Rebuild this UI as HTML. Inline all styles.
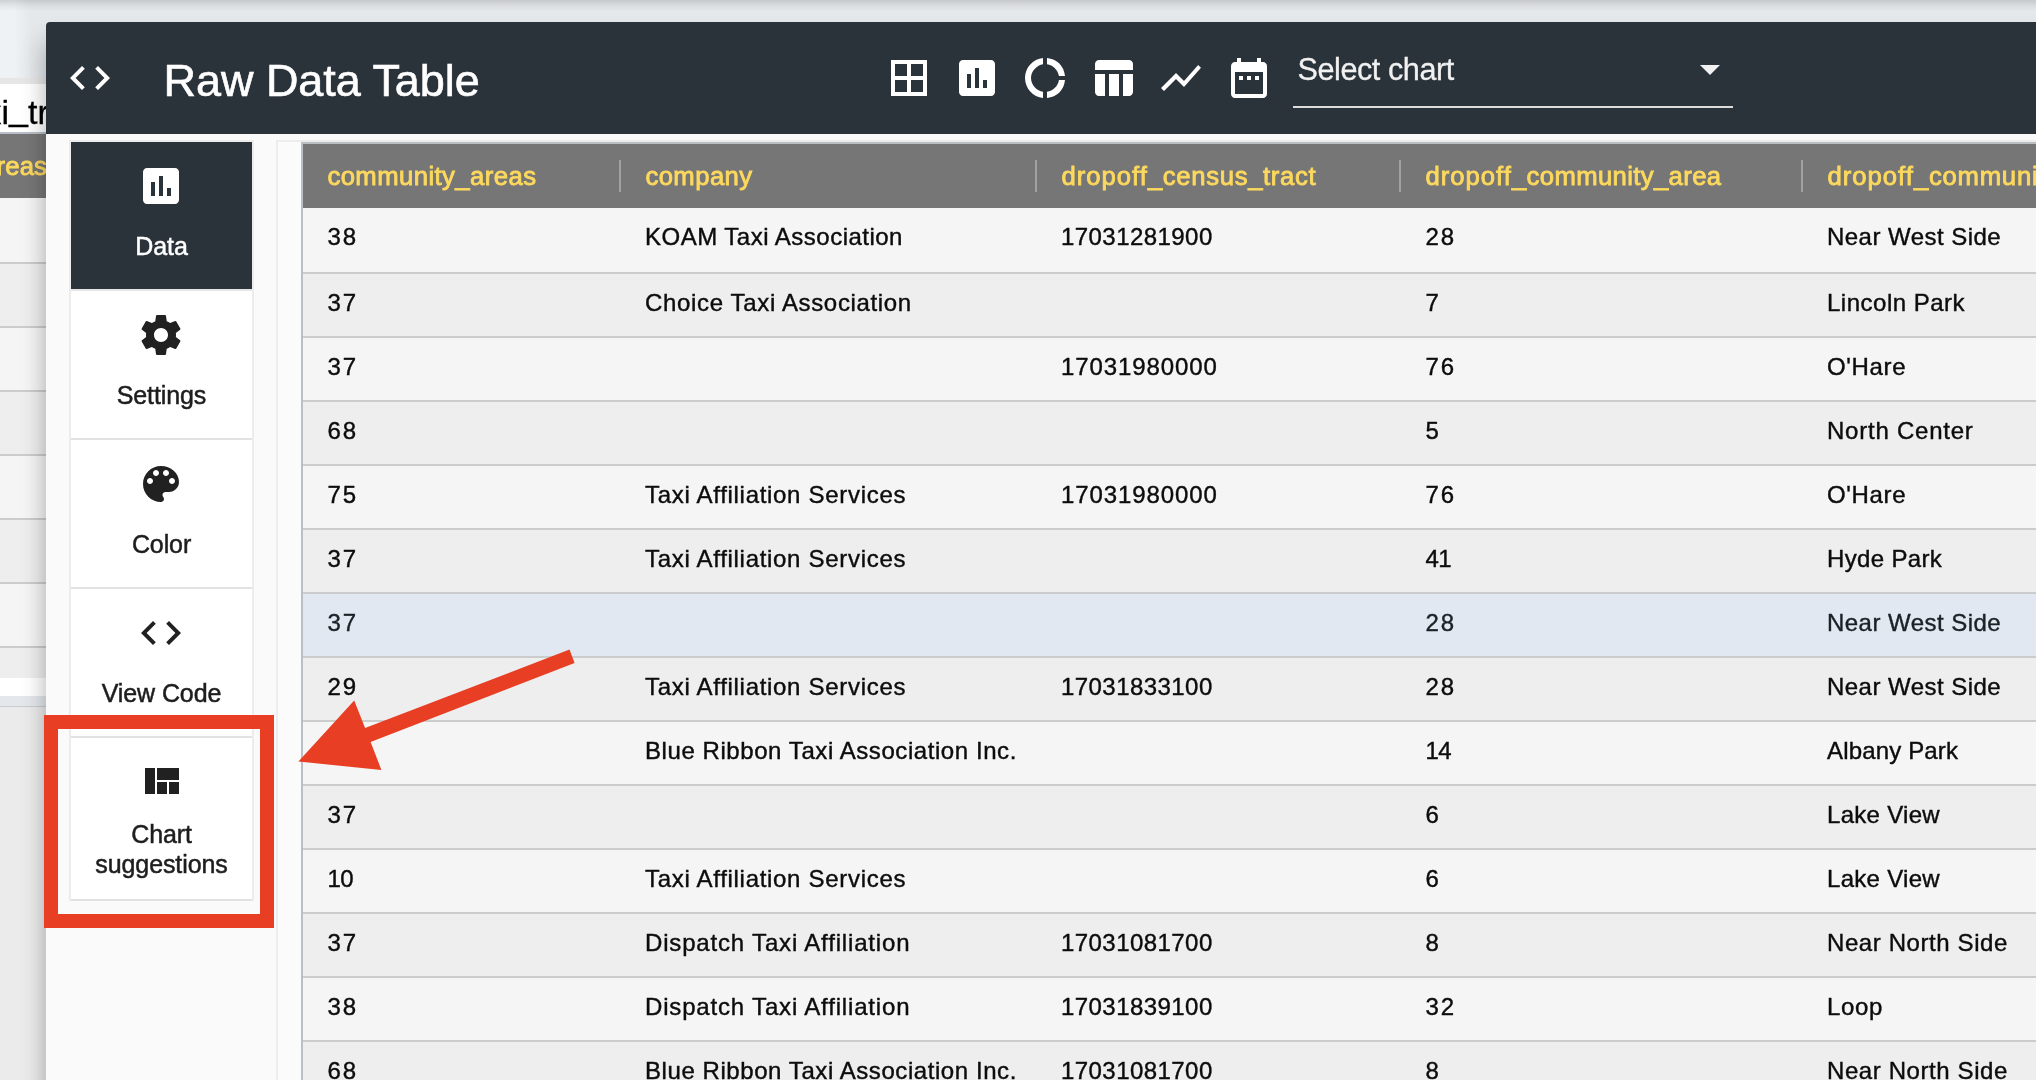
<!DOCTYPE html>
<html lang="en">
<head>
<meta charset="utf-8">
<title>Raw Data Table</title>
<style>
*{box-sizing:border-box;margin:0;padding:0}
html,body{width:2036px;height:1080px;overflow:hidden}
body{will-change:transform;position:relative;background:#e5e8eb;font-family:"Liberation Sans",sans-serif;color:#111}
.abs{position:absolute}
/* ---------- page behind the dialog ---------- */
#topshade{left:0;top:0;width:2036px;height:11px;background:linear-gradient(rgba(60,65,70,.19),rgba(60,65,70,.07) 50%,rgba(60,65,70,0))}
#bglight{left:0;top:0;width:32px;height:78px;background:linear-gradient(90deg,#eef2f5,#eef2f5 40%,rgba(238,242,245,0))}
#bgband{left:0;top:78px;width:60px;height:6px;background:#e6e6e6}
#bgtitle{left:0;top:84px;width:60px;height:49px;background:#fff}
#bgtitle span{position:absolute;left:-15.5px;top:4px;font-size:34px;line-height:49px;color:#000;white-space:nowrap;-webkit-text-stroke:.3px #000}
#bgtitle u{text-decoration:none;position:relative;top:-4px}
#bgline{left:0;top:132px;width:60px;height:2px;background:#b9bfc6}
#bghead{left:0;top:134px;width:60px;height:64px;background:#767676}
#bghead span{position:absolute;left:-3.4px;top:0;line-height:64px;font-size:25.7px;color:#fcd95e;white-space:nowrap;letter-spacing:.1px;-webkit-text-stroke:.85px #fcd95e}
.bgrow{left:0;width:60px;border-bottom:2px solid #cbcccc}
#bgwhite{left:0;top:678px;width:60px;height:18px;background:#fff}
#bgblue{left:0;top:696px;width:60px;height:10px;background:#e4e7ec}
#bgdark{left:0;top:706px;width:60px;height:1px;background:#c9ccd0}
#bgbottom{left:0;top:707px;width:60px;height:373px;background:#ebebeb}
#bgshade{display:none;left:16px;top:134px;width:30px;height:946px;background:linear-gradient(90deg,rgba(0,0,0,0),rgba(0,0,0,.05) 50%,rgba(0,0,0,.17))}
#bgshade2{display:none;left:26px;top:30px;width:20px;height:104px;background:linear-gradient(90deg,rgba(0,0,0,0),rgba(0,0,0,.10))}
/* ---------- dialog ---------- */
#dialog{left:46px;top:22px;width:2000px;height:1070px;background:#fafafa;border-radius:4px 0 0 0;overflow:hidden;box-shadow:0 20px 24px rgba(0,0,0,.32)}
#dhead{left:0;top:0;width:2000px;height:112px;background:#2a323a}
#title{left:117.6px;top:29px;font-size:45px;line-height:60px;color:#fff;white-space:nowrap;letter-spacing:-.05px;-webkit-text-stroke:.6px #fff}
.ico{position:absolute;width:48px;height:48px;fill:#fff}
#seltxt{left:1251.6px;top:27px;font-size:30.6px;line-height:40px;color:#f1f1f1;white-space:nowrap;letter-spacing:-.45px;-webkit-text-stroke:.3px #f1f1f1}
#selline{left:1247px;top:84px;width:440px;height:2px;background:#dcdcdc}
#selarrow{left:1654px;top:43px;width:0;height:0;border-left:10px solid transparent;border-right:10px solid transparent;border-top:10px solid #f1f1f1}
/* sidebar */
#side{left:23px;top:118px;width:185px;border:2px solid #ececec;border-bottom:0;background:#fff}
.sb{position:relative;width:181px;height:149px;border-bottom:2px solid #e2e2e2;background:#fff;text-align:center;font-size:25px;color:#1d1d1d;-webkit-text-stroke:.5px currentColor;letter-spacing:-.1px}
.sb svg{position:absolute;left:66.4px;top:20px;width:48px;height:48px;fill:#212121}
.sb span{position:absolute;left:0;width:181px;top:89.4px;line-height:30px}
.sb.act{background:#2a323a;color:#fff;border-bottom-color:#e6e6e6}
.sb.act svg{fill:#fff}
.sb.last{height:163px}
.sb.last span{top:81px}
/* card + table */
#card{left:230px;top:118px;width:1800px;height:1000px;border:2px solid #ededed;background:#fbfbfb}
#grid{left:255px;top:120px;width:1800px;height:1000px;border:2px solid #babfc6;background:#f5f5f5}
#ghead{left:0;top:0;width:1800px;height:64px;background:#767676;z-index:2}
.hc{position:absolute;top:0;line-height:64px;font-size:25.7px;color:#fcd95e;white-space:nowrap;letter-spacing:.42px;-webkit-text-stroke:.85px #fcd95e;margin-left:.4px}
.hc b{font-weight:normal;letter-spacing:1px}
.sep{position:absolute;top:16px;width:2px;height:32px;background:#a1a1a3}
.row{position:absolute;left:0;width:1800px;height:64px;border-bottom:2px solid #cbcccc;background:#f5f5f5;font-size:24px;line-height:57px;color:#0c0c0c;white-space:nowrap;-webkit-text-stroke:.4px #0c0c0c}
.row.odd{background:#eee}
.row.hl{background:#e1e8f2;color:#1b2125;-webkit-text-stroke-color:#1b2125}
.row i{position:absolute;top:0;font-style:normal;letter-spacing:.46px}
.row i.n{letter-spacing:.44px}
.row i.s{letter-spacing:1.7px;margin-left:.6px}
.c1{left:24px}.c2{left:342px}.c3{left:758px}.c4{left:1122px}.c5{left:1524px}
/* annotation */
#redbox{left:44px;top:715px;width:230px;height:213px;border:14.5px solid #e83e24}
#arrow{left:280px;top:630px;width:320px;height:160px}
</style>
</head>
<body>
<div id="bglight" class="abs"></div>
<div id="topshade" class="abs"></div>
<div id="bgband" class="abs"></div>
<div id="bgtitle" class="abs"><span>xi<u>_</u>trips</span></div>
<div id="bgline" class="abs"></div>
<div id="bghead" class="abs"><span>reas</span></div>
<div class="abs bgrow" style="top:198px;height:66px;background:#f5f5f5"></div>
<div class="abs bgrow" style="top:264px;height:64px;background:#eee"></div>
<div class="abs bgrow" style="top:328px;height:64px;background:#f5f5f5"></div>
<div class="abs bgrow" style="top:392px;height:64px;background:#eee"></div>
<div class="abs bgrow" style="top:456px;height:64px;background:#f5f5f5"></div>
<div class="abs bgrow" style="top:520px;height:64px;background:#eee"></div>
<div class="abs bgrow" style="top:584px;height:64px;background:#f5f5f5"></div>
<div class="abs bgrow" style="top:648px;height:64px;background:#eee"></div>
<div id="bgwhite" class="abs"></div>
<div id="bgblue" class="abs"></div>
<div id="bgdark" class="abs"></div>
<div id="bgbottom" class="abs"></div>
<div id="bgshade" class="abs"></div>
<div id="bgshade2" class="abs"></div>

<div id="dialog" class="abs">
  <div id="dhead" class="abs">
    <svg class="ico" style="left:20px;top:32px" viewBox="0 0 24 24"><path d="M9.4 16.6L4.8 12l4.6-4.6L8 6l-6 6 6 6 1.4-1.4zm5.2 0l4.6-4.6-4.6-4.6L16 6l6 6-6 6-1.4-1.4z"/></svg>
    <div id="title" class="abs">Raw Data Table</div>
    <svg class="ico" style="left:839px;top:32px" viewBox="0 0 24 24"><path d="M3 3v18h18V3H3zm8 16H5v-6h6v6zm0-8H5V5h6v6zm8 8h-6v-6h6v6zm0-8h-6V5h6v6z"/></svg>
    <svg class="ico" style="left:907px;top:32px" viewBox="0 0 24 24"><path d="M19 3H5c-1.1 0-2 .9-2 2v14c0 1.1.9 2 2 2h14c1.1 0 2-.9 2-2V5c0-1.1-.9-2-2-2zM9 17H7v-7h2v7zm4 0h-2V7h2v10zm4 0h-2v-4h2v4z"/></svg>
    <svg class="ico" style="left:975px;top:32px" viewBox="0 0 24 24"><path d="M11 5.080V2c-5 .5-9 4.810-9 10s4 9.500 9 10v-3.080c-3-.480-6-3.400-6-6.920s3-6.440 6-6.920zM18.970 11H22c-.470-5-4-8.530-9-9v3.080C16 5.510 18.540 8 18.970 11zM13 18.920V22c5-.470 8.530-4 9-9h-3.030c-.430 3-2.970 5.490-5.970 5.920z"/></svg>
    <svg class="ico" style="left:1043px;top:32px" viewBox="0 0 24 24"><path d="M10 10.020h5V21h-5zM17 21h3c1.100 0 2-.900 2-2v-9h-5v11zm3-18H5c-1.100 0-2 .900-2 2v3h19V5c0-1.100-.900-2-2-2zM3 19c0 1.100.900 2 2 2h3V10H3v9z"/></svg>
    <svg class="ico" style="left:1111px;top:32px" viewBox="0 0 24 24"><path d="M3.500 18.490l6-6.010 4 4L22 6.920l-1.410-1.410-7.090 7.970-4-4L2 16.990z"/></svg>
    <svg class="ico" style="left:1179px;top:32px" viewBox="0 0 24 24"><path d="M9 11H7v2h2v-2zm4 0h-2v2h2v-2zm4 0h-2v2h2v-2zm2-7h-1V2h-2v2H8V2H6v2H5c-1.110 0-1.990.900-1.990 2L3 20c0 1.100.890 2 2 2h14c1.100 0 2-.900 2-2V6c0-1.100-.900-2-2-2zm0 16H5V9h14v11z"/></svg>
    <div id="seltxt" class="abs">Select chart</div>
    <div id="selarrow" class="abs"></div>
    <div id="selline" class="abs"></div>
  </div>

  <div id="side" class="abs">
    <div class="sb act"><svg viewBox="0 0 24 24"><path d="M19 3H5c-1.100 0-2 .900-2 2v14c0 1.100.900 2 2 2h14c1.100 0 2-.900 2-2V5c0-1.100-.900-2-2-2zM9 17H7v-7h2v7zm4 0h-2V7h2v10zm4 0h-2v-4h2v4z"/></svg><span>Data</span></div>
    <div class="sb"><svg viewBox="0 0 24 24"><path d="M19.43 12.98c.04-.32.07-.64.07-.98s-.03-.66-.07-.98l2.11-1.65c.19-.15.24-.42.12-.64l-2-3.46c-.12-.22-.39-.3-.61-.22l-2.49 1c-.52-.4-1.08-.73-1.69-.98l-.38-2.65C14.46 2.18 14.25 2 14 2h-4c-.25 0-.46.18-.49.42l-.38 2.65c-.61.25-1.17.59-1.69.98l-2.49-1c-.23-.09-.49 0-.61.22l-2 3.46c-.13.22-.07.49.12.64l2.11 1.65c-.04.32-.07.65-.07.98s.03.66.07.98l-2.11 1.65c-.19.15-.24.42-.12.64l2 3.46c.12.22.39.3.61.22l2.49-1c.52.4 1.080.73 1.69.98l.38 2.65c.03.24.24.42.49.42h4c.25 0 .46-.18.49-.42l.38-2.65c.61-.25 1.17-.59 1.69-.98l2.49 1c.23.09.49 0 .61-.22l2-3.46c.12-.22.07-.49-.12-.64l-2.11-1.65zM12 15.5c-1.93 0-3.500-1.570-3.500-3.500s1.570-3.500 3.500-3.500 3.500 1.570 3.500 3.500-1.570 3.500-3.500 3.500z"/></svg><span>Settings</span></div>
    <div class="sb"><svg viewBox="0 0 24 24"><path d="M12 3c-4.970 0-9 4.030-9 9s4.030 9 9 9c.830 0 1.500-.670 1.500-1.500 0-.390-.150-.740-.390-1.010-.230-.260-.380-.610-.380-.990 0-.830.670-1.500 1.500-1.500H16c2.760 0 5-2.240 5-5 0-4.420-4.030-8-9-8zm-5.500 9c-.830 0-1.500-.670-1.500-1.500S5.670 9 6.500 9 8 9.670 8 10.500 7.330 12 6.500 12zm3-4C8.670 8 8 7.330 8 6.500S8.670 5 9.500 5s1.500.670 1.500 1.500S10.330 8 9.500 8zm5 0c-.830 0-1.500-.670-1.500-1.500S13.670 5 14.500 5s1.500.670 1.500 1.500S15.330 8 14.500 8zm3 4c-.830 0-1.500-.670-1.500-1.500S16.670 9 17.500 9s1.500.670 1.500 1.500-.670 1.500-1.500 1.500z"/></svg><span>Color</span></div>
    <div class="sb"><svg viewBox="0 0 24 24"><path d="M9.400 16.600L4.800 12l4.600-4.600L8 6l-6 6 6 6 1.400-1.400zm5.200 0l4.600-4.600-4.600-4.600L16 6l6 6-6 6-1.400-1.400z"/></svg><span>View Code</span></div>
    <div class="sb last"><svg viewBox="0 0 24 24"><path d="M10 18h5v-6h-5v6zm-6 0h5V5H4v13zm12 0h5v-6h-5v6zM10 5v6h11V5H10z"/></svg><span>Chart<br>suggestions</span></div>
  </div>

  <div id="card" class="abs"></div>
  <div id="grid" class="abs">
    <div id="ghead" class="abs">
      <span class="hc c1">community_areas</span><span class="sep" style="left:316px"></span>
      <span class="hc c2">company</span><span class="sep" style="left:732px"></span>
      <span class="hc c3" style="letter-spacing:.65px"><b>dropoff</b>_census_tract</span><span class="sep" style="left:1096px"></span>
      <span class="hc c4" style="letter-spacing:.36px"><b>dropoff</b>_community_area</span><span class="sep" style="left:1498px"></span>
      <span class="hc c5" style="letter-spacing:.75px"><b>dropoff</b>_community_area_name</span>
    </div>
    <div id="rows">
      <div class="row" style="top:64px;height:66px"><i class="c1 s">38</i><i class="c2" style="letter-spacing:0.49px">KOAM Taxi Association</i><i class="c3 n">17031281900</i><i class="c4 s">28</i><i class="c5" style="letter-spacing:0.46px">Near West Side</i></div>
      <div class="row odd" style="top:130px;height:64px"><i class="c1 s">37</i><i class="c2" style="letter-spacing:0.66px">Choice Taxi Association</i><i class="c4 s">7</i><i class="c5" style="letter-spacing:0.50px">Lincoln Park</i></div>
      <div class="row" style="top:194px;height:64px"><i class="c1 s">37</i><i class="c3 n" style="letter-spacing:0.91px">17031980000</i><i class="c4 s">76</i><i class="c5" style="letter-spacing:0.66px">O&#39;Hare</i></div>
      <div class="row odd" style="top:258px;height:64px"><i class="c1 s">68</i><i class="c4 s">5</i><i class="c5" style="letter-spacing:0.77px">North Center</i></div>
      <div class="row" style="top:322px;height:64px"><i class="c1 s">75</i><i class="c2" style="letter-spacing:0.70px">Taxi Affiliation Services</i><i class="c3 n" style="letter-spacing:0.91px">17031980000</i><i class="c4 s">76</i><i class="c5" style="letter-spacing:0.66px">O&#39;Hare</i></div>
      <div class="row odd" style="top:386px;height:64px"><i class="c1 s">37</i><i class="c2" style="letter-spacing:0.70px">Taxi Affiliation Services</i><i class="c4 s" style="letter-spacing:-0.60px">41</i><i class="c5" style="letter-spacing:0.34px">Hyde Park</i></div>
      <div class="row hl" style="top:450px;height:64px"><i class="c1 s">37</i><i class="c4 s">28</i><i class="c5" style="letter-spacing:0.46px">Near West Side</i></div>
      <div class="row odd" style="top:514px;height:64px"><i class="c1 s">29</i><i class="c2" style="letter-spacing:0.70px">Taxi Affiliation Services</i><i class="c3 n">17031833100</i><i class="c4 s">28</i><i class="c5" style="letter-spacing:0.46px">Near West Side</i></div>
      <div class="row" style="top:578px;height:64px"><i class="c2" style="letter-spacing:0.57px">Blue Ribbon Taxi Association Inc.</i><i class="c4 s" style="letter-spacing:-0.60px">14</i><i class="c5" style="letter-spacing:0.16px">Albany Park</i></div>
      <div class="row odd" style="top:642px;height:64px"><i class="c1 s">37</i><i class="c4 s">6</i><i class="c5" style="letter-spacing:0.29px">Lake View</i></div>
      <div class="row" style="top:706px;height:64px"><i class="c1 s" style="letter-spacing:-0.60px">10</i><i class="c2" style="letter-spacing:0.70px">Taxi Affiliation Services</i><i class="c4 s">6</i><i class="c5" style="letter-spacing:0.29px">Lake View</i></div>
      <div class="row odd" style="top:770px;height:64px"><i class="c1 s">37</i><i class="c2" style="letter-spacing:0.83px">Dispatch Taxi Affiliation</i><i class="c3 n">17031081700</i><i class="c4 s">8</i><i class="c5" style="letter-spacing:0.59px">Near North Side</i></div>
      <div class="row" style="top:834px;height:64px"><i class="c1 s">38</i><i class="c2" style="letter-spacing:0.83px">Dispatch Taxi Affiliation</i><i class="c3 n">17031839100</i><i class="c4 s">32</i><i class="c5" style="letter-spacing:0.66px">Loop</i></div>
      <div class="row odd" style="top:898px;height:64px"><i class="c1 s">68</i><i class="c2" style="letter-spacing:0.57px">Blue Ribbon Taxi Association Inc.</i><i class="c3 n">17031081700</i><i class="c4 s">8</i><i class="c5" style="letter-spacing:0.59px">Near North Side</i></div>
    </div><!--rows-->
  </div>
</div>

<div id="redbox" class="abs"></div>
<svg id="arrow" class="abs" viewBox="280 630 320 160"><polygon fill="#e83e24" points="298.4,761.5 354.2,700.5 365.1,728 569.5,649.6 574.6,663 370.6,742 381.4,769.9"/></svg>
</body>
</html>
